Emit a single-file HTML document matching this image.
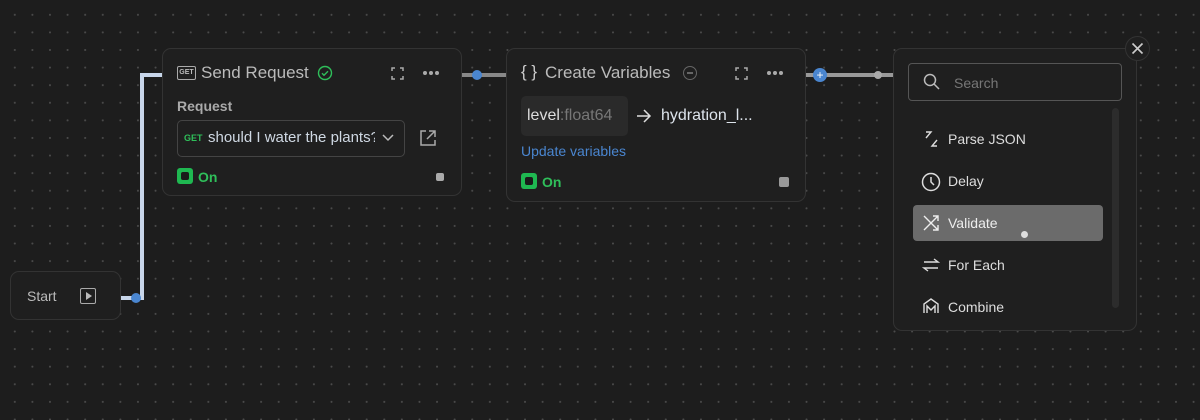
<!DOCTYPE html>
<html><head><style>
*{box-sizing:border-box;margin:0;padding:0}
body{width:1200px;height:420px;overflow:hidden;background-color:#1d1d1d;background-image:radial-gradient(circle,#4a4a4a 0.8px,transparent 1.2px);background-size:17.6px 17.6px;background-position:6px 6px;font-family:"Liberation Sans",sans-serif;position:relative;color:#ccc}
.abs{position:absolute}
.node{position:absolute;background:#1f1f1f;border:1px solid #333;border-radius:9px}
.t{position:absolute;white-space:nowrap}
.on{position:absolute;width:16px;height:16px;background:#1fb851;border-radius:3px}
.on:after{content:"";position:absolute;left:4px;top:4px;width:8px;height:8px;background:#1a1a1a;border-radius:2px}
.dots{position:absolute;width:16px;height:4px}
.dots i{position:absolute;top:0;width:4px;height:4px;border-radius:50%;background:#aaa}
</style></head><body>
<!-- connectors -->
<div class="abs" style="left:121px;top:296px;width:18px;height:4px;background:#c8d6ea"></div>
<div class="abs" style="left:140px;top:73px;width:4px;height:227px;background:#c8d6ea"></div>
<div class="abs" style="left:140px;top:73px;width:24px;height:4px;background:#c8d6ea"></div>
<div class="abs" style="left:131px;top:293px;width:10px;height:10px;border-radius:50%;background:#4a86d0"></div>
<div class="abs" style="left:461px;top:73px;width:46px;height:4px;background:#888"></div>
<div class="abs" style="left:472px;top:70px;width:10px;height:10px;border-radius:50%;background:#4a86d0"></div>
<div class="abs" style="left:805px;top:73px;width:88px;height:4px;background:#999"></div>
<div class="abs" style="left:813px;top:68px;width:14px;height:14px;border-radius:50%;background:#4a86d0;color:#fff;font-size:12px;line-height:14px;text-align:center">+</div>
<div class="abs" style="left:874px;top:71px;width:8px;height:8px;border-radius:50%;background:#aaa"></div>

<!-- Start -->
<div class="node" style="left:10px;top:271px;width:111px;height:49px"></div>
<div class="t" style="left:27px;top:288px;font-size:14px;color:#bbb">Start</div>
<div class="abs" style="left:80px;top:288px;width:16px;height:16px;border:1.5px solid #aaa;border-radius:2px"></div>
<div class="abs" style="left:86px;top:292px;border-left:6px solid #bbb;border-top:4px solid transparent;border-bottom:4px solid transparent"></div>

<!-- Send Request -->
<div class="node" style="left:162px;top:48px;width:300px;height:148px"></div>
<div class="abs" style="left:177px;top:66px;width:19px;height:14px;border:1.5px solid #aaa;border-radius:2px;font-size:7px;font-weight:bold;color:#bbb;text-align:center;line-height:11px">GET</div>
<div class="t" style="left:201px;top:63px;font-size:17px;color:#bbb">Send Request</div>
<svg class="abs" style="left:317px;top:65px" width="16" height="16"><circle cx="8" cy="8" r="6.5" stroke="#2fbf5a" stroke-width="1.4" fill="none"/><path d="M5 8.2l2 2 4-4" stroke="#2fbf5a" stroke-width="1.4" fill="none"/></svg>
<svg class="abs" style="left:391px;top:67px" width="13" height="13"><path d="M1 4V1h3M9 1h3v3M12 9v3H9M4 12H1V9" stroke="#aaa" stroke-width="1.5" fill="none"/></svg>
<div class="dots" style="left:423px;top:71px"><i style="left:0"></i><i style="left:6px"></i><i style="left:12px"></i></div>
<div class="t" style="left:177px;top:98px;font-size:14px;font-weight:bold;color:#aaa">Request</div>
<div class="abs" style="left:177px;top:120px;width:228px;height:37px;border:1px solid #444;border-radius:5px"></div>
<div class="t" style="left:184px;top:133px;font-size:9px;font-weight:bold;color:#2fbf5a">GET</div>
<div class="t" style="left:208px;top:129px;font-size:15px;color:#cfd8e3;width:167px;overflow:hidden">should I water the plants?</div>
<svg class="abs" style="left:382px;top:134px" width="12" height="8"><path d="M1 1l5 5 5-5" stroke="#bbb" stroke-width="1.5" fill="none"/></svg>
<svg class="abs" style="left:419px;top:129px" width="18" height="18"><path d="M7 2H2v14h14v-5M10 2h6v6M16 2L8 10" stroke="#aaa" stroke-width="1.5" fill="none"/></svg>
<div class="on" style="left:177px;top:168px"></div>
<div class="t" style="left:198px;top:169px;font-size:14px;font-weight:bold;color:#2fbf5a">On</div>
<div class="abs" style="left:436px;top:173px;width:8px;height:8px;background:#aaa;border-radius:2px"></div>

<!-- Create Variables -->
<div class="node" style="left:506px;top:48px;width:300px;height:154px"></div>
<div class="t" style="left:521px;top:62px;font-size:17px;color:#ccc">{ }</div>
<div class="t" style="left:545px;top:63px;font-size:17px;color:#bbb">Create Variables</div>
<div class="abs" style="left:683px;top:66px;width:14px;height:14px;border:1.5px solid #666;border-radius:50%"></div>
<div class="abs" style="left:687px;top:72px;width:6px;height:1.5px;background:#666"></div>
<svg class="abs" style="left:735px;top:67px" width="13" height="13"><path d="M1 4V1h3M9 1h3v3M12 9v3H9M4 12H1V9" stroke="#aaa" stroke-width="1.5" fill="none"/></svg>
<div class="dots" style="left:767px;top:71px"><i style="left:0"></i><i style="left:6px"></i><i style="left:12px"></i></div>
<div class="abs" style="left:521px;top:96px;width:107px;height:40px;background:#2a2a2a;border-radius:5px"></div>
<div class="t" style="left:527px;top:107px;font-size:16px;color:#ddd">level<span style="color:#777">:float64</span></div>
<svg class="abs" style="left:636px;top:109px" width="16" height="14"><path d="M1 7h13M8 1l6 6-6 6" stroke="#ddd" stroke-width="1.5" fill="none"/></svg>
<div class="t" style="left:661px;top:107px;font-size:16px;color:#dde4ec">hydration_l...</div>
<div class="t" style="left:521px;top:143px;font-size:14px;color:#4a86d0">Update variables</div>
<div class="on" style="left:521px;top:173px"></div>
<div class="t" style="left:542px;top:174px;font-size:14px;font-weight:bold;color:#2fbf5a">On</div>
<div class="abs" style="left:779px;top:177px;width:10px;height:10px;background:#999;border-radius:2px"></div>

<!-- Panel -->
<div class="node" style="left:893px;top:48px;width:244px;height:283px"></div>
<div class="abs" style="left:1125px;top:36px;width:25px;height:25px;border-radius:50%;background:#1f1f1f;border:1px solid #333"></div>
<svg class="abs" style="left:1131px;top:42px" width="13" height="13"><path d="M1.5 1.5l10 10M11.5 1.5l-10 10" stroke="#ccc" stroke-width="1.6"/></svg>
<div class="abs" style="left:908px;top:63px;width:214px;height:38px;border:1px solid #555;border-radius:4px"></div>
<svg class="abs" style="left:923px;top:73px" width="18" height="18"><circle cx="7" cy="7" r="5.5" stroke="#bbb" stroke-width="1.5" fill="none"/><path d="M11 11l5 5" stroke="#bbb" stroke-width="1.5"/></svg>
<div class="t" style="left:954px;top:75px;font-size:14px;color:#777">Search</div>
<div class="abs" style="left:1112px;top:108px;width:7px;height:200px;background:#2c2c2c;border-radius:4px"></div>
<div class="abs" style="left:913px;top:205px;width:190px;height:36px;background:#6b6b6b;border-radius:4px"></div>
<svg class="abs" style="left:922px;top:130px" width="18" height="18"><path d="M4 2h5L4 8M15 16h-5l5-6" stroke="#ddd" stroke-width="1.4" fill="none"/></svg>
<div class="t" style="left:948px;top:131px;font-size:14px;color:#ddd">Parse JSON</div>
<svg class="abs" style="left:921px;top:172px" width="20" height="20"><circle cx="10" cy="10" r="8.5" stroke="#ddd" stroke-width="1.5" fill="none"/><path d="M10 5v5l3 3" stroke="#ddd" stroke-width="1.5" fill="none"/></svg>
<div class="t" style="left:948px;top:173px;font-size:14px;color:#ddd">Delay</div>
<svg class="abs" style="left:922px;top:214px" width="18" height="18"><path d="M2 16L16 2M11 2h5v5M2 2l14 14M11 16h5v-5" stroke="#eee" stroke-width="1.4" fill="none"/></svg>
<div class="t" style="left:948px;top:215px;font-size:14px;color:#eee">Validate</div>
<div class="abs" style="left:1021px;top:231px;width:7px;height:7px;background:#ddd;border-radius:50%"></div>
<svg class="abs" style="left:922px;top:257px" width="18" height="16"><path d="M2 5h14l-4-3M16 11H2l4 3" stroke="#ddd" stroke-width="1.4" fill="none"/></svg>
<div class="t" style="left:948px;top:257px;font-size:14px;color:#ddd">For Each</div>
<svg class="abs" style="left:922px;top:297px" width="18" height="18"><path d="M2 16V7l7-5 7 5v9M5 16V9l4 4 4-4v7" stroke="#ddd" stroke-width="1.4" fill="none"/></svg>
<div class="t" style="left:948px;top:299px;font-size:14px;color:#ddd;height:16px;overflow:hidden">Combine</div>
</body></html>
